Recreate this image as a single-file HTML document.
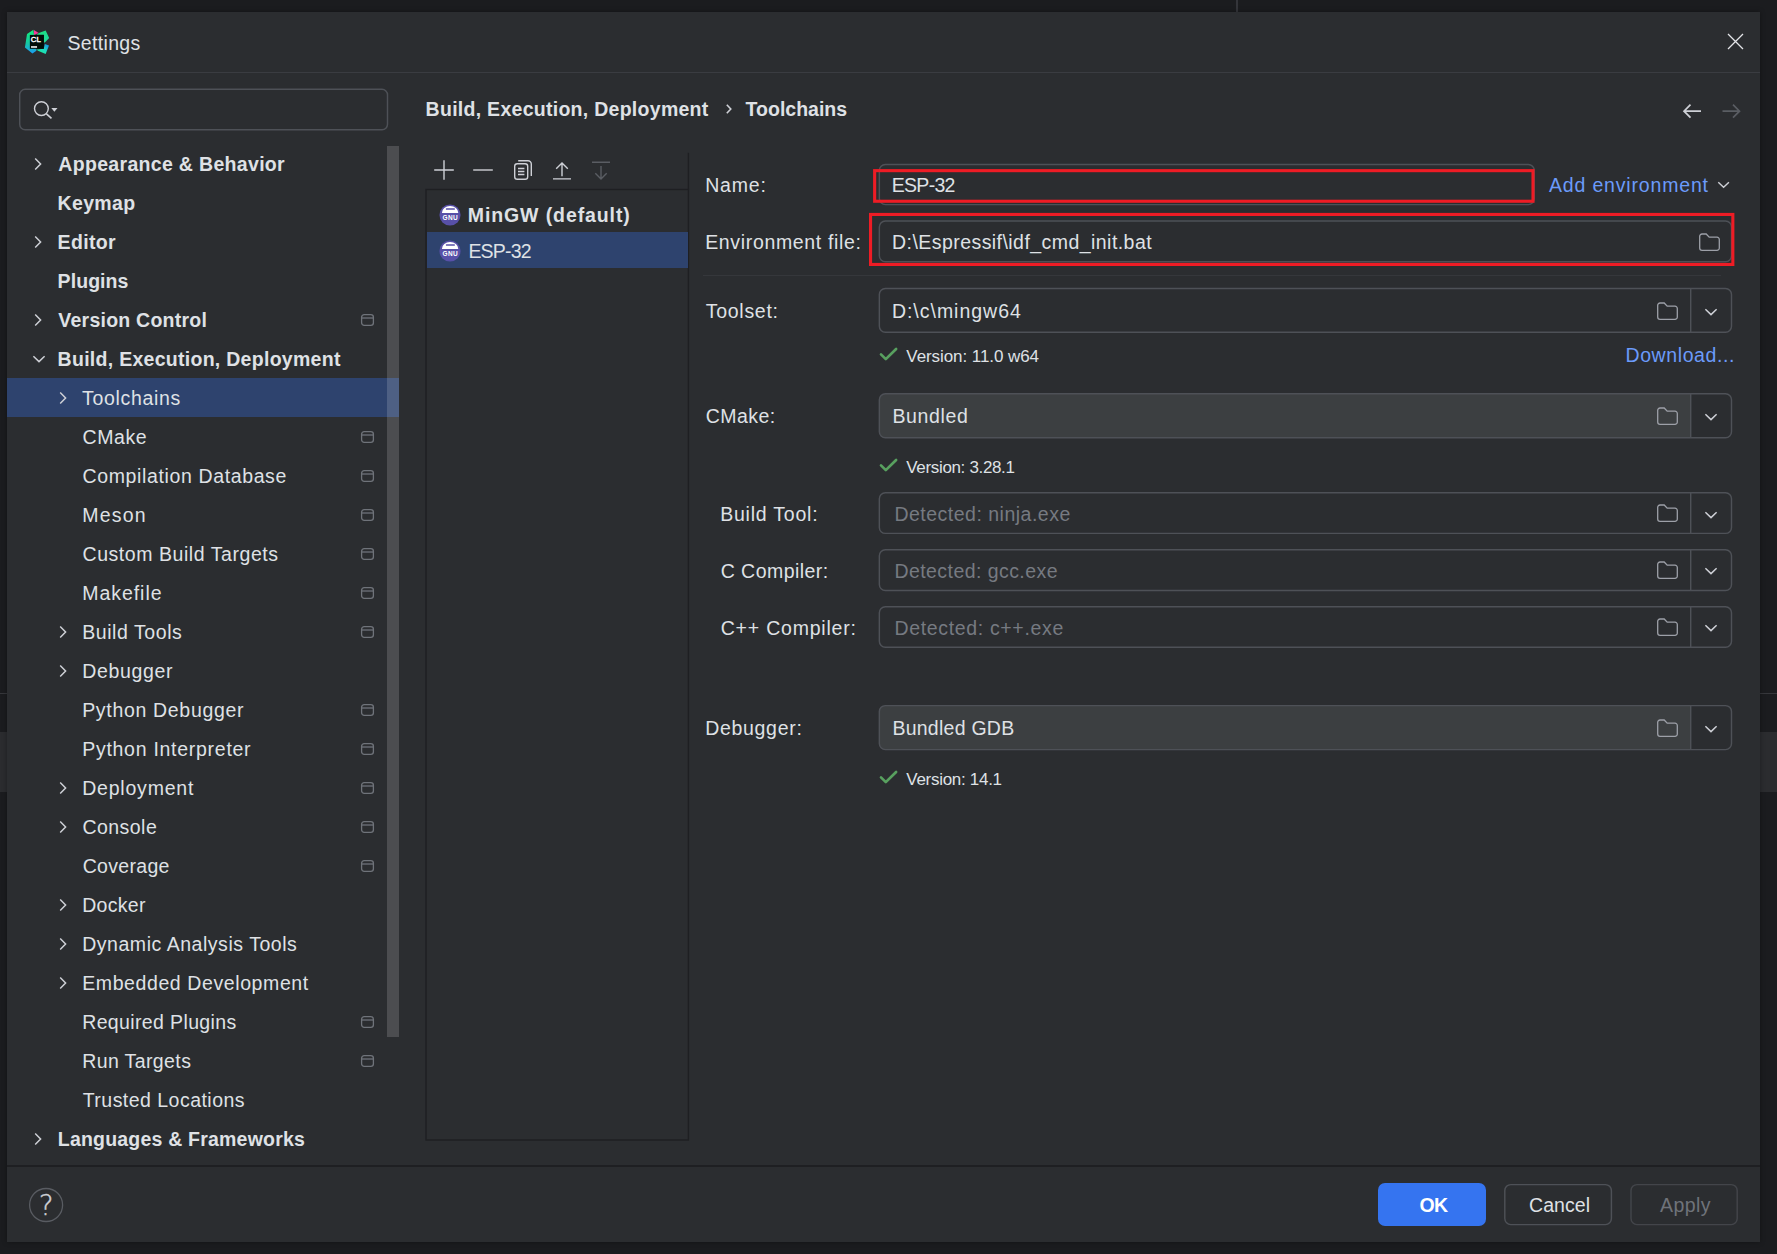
<!DOCTYPE html>
<html lang="en"><head><meta charset="utf-8"><title>Settings</title>
<style>
html,body{margin:0;padding:0}
body{width:1777px;height:1254px;position:relative;overflow:hidden;background:#1b1c1f;font-family:"Liberation Sans",sans-serif;font-size:19.5px;color:#dfe1e5}
div,svg,.t{position:absolute}
.t{white-space:pre;line-height:30px;height:30px}
svg{overflow:visible}
</style></head><body>
<div class="" style="left:0px;top:0px;width:1777px;height:1254px;background:#1b1c1f"></div>
<div class="" style="left:0px;top:693px;width:1777px;height:1.4px;background:#36373b"></div>
<div class="" style="left:0px;top:732px;width:1777px;height:60px;background:#2b2c2f"></div>
<div class="" style="left:1236px;top:0px;width:2px;height:12px;background:#34353a"></div>
<div class="dlg" style="left:7px;top:12px;width:1753px;height:1229.5px;background:#2b2d30;box-shadow:0 0 5px 0 rgba(0,0,0,.35)"></div>
<div class="" style="left:7px;top:72px;width:1753px;height:1px;background:#3a3c41"></div>
<div class="" style="left:7px;top:1165px;width:1753px;height:2px;background:#1e1f22"></div>
<svg style="left:16px;top:22px" width="50" height="40" viewBox="0 0 1568 1254" >
<defs>
<linearGradient id="ga" x1="0" y1="0" x2="0" y2="1"><stop offset="0" stop-color="#13f07c"/><stop offset=".55" stop-color="#16c9a0"/><stop offset="1" stop-color="#1a9df5"/></linearGradient>
<linearGradient id="gb" x1="0" y1="0" x2="1" y2="1"><stop offset="0" stop-color="#1ce27a"/><stop offset="1" stop-color="#1fd6a0"/></linearGradient>
<linearGradient id="gc" x1="0" y1="1" x2="1" y2="0"><stop offset="0" stop-color="#17f08a"/><stop offset=".5" stop-color="#1fdcc0"/><stop offset="1" stop-color="#1188e8"/></linearGradient>
</defs>
<polygon points="545,245 345,380 280,800 515,985 640,900 640,400 565,400" fill="url(#ga)"/>
<polygon points="560,250 715,345 565,405" fill="#f43b9c"/>
<polygon points="715,345 930,270 1040,505 905,640 870,640 870,400 640,400" fill="url(#gb)"/>
<polygon points="905,690 1035,735 930,1000 690,905 640,860 870,840" fill="url(#gc)"/>
<rect x="435" y="405" width="440" height="435" fill="#010d08"/>
<text x="464" y="626" font-family="Liberation Sans, sans-serif" font-size="248" fill="#fff" stroke="#fff" stroke-width="13" letter-spacing="4">CL</text>
<rect x="470" y="757" width="190" height="52" fill="#e8e8e8"/>
</svg>
<span class="t" style="left:67.50px;top:28.22px;letter-spacing:0.327px">Settings</span>
<svg style="left:1727px;top:33px" width="17" height="17" viewBox="0 0 17 17" ><path d="M1 1L16 16M16 1L1 16" stroke="#e4e5e9" stroke-width="1.3" fill="none"/></svg>
<svg style="left:17px;top:87px" width="374" height="46" viewBox="0 0 374 46" ><rect x="2.70" y="2.30" width="367.80" height="40.50" rx="5.5" fill="none" stroke="#4e5157" stroke-width="1.45"/></svg>
<svg style="left:32px;top:99px" width="27" height="22" viewBox="0 0 27 22" ><circle cx="9.4" cy="9.6" r="6.9" stroke="#ced0d6" stroke-width="1.4" fill="none"/><path d="M14.4 14.8L19.5 19.4" stroke="#ced0d6" stroke-width="1.6"/><path d="M19.3 9.1h6.2l-3.1 3.7z" fill="#ced0d6"/></svg>
<div class="" style="left:7px;top:378px;width:392px;height:39px;background:#2e436e"></div>
<div class="" style="left:387px;top:146px;width:12px;height:891px;background:rgba(255,255,255,.155)"></div>
<span class="t" style="left:58.30px;top:149.22px;font-weight:bold;letter-spacing:0.320px">Appearance &amp; Behavior</span>
<svg style="left:33.4px;top:156px" width="10" height="16" viewBox="0 0 10 16" ><path d="M2.200 2.500L7.600 8L2.200 13.500" stroke="#ced0d6" stroke-width="1.500" fill="none"/></svg>
<span class="t" style="left:57.60px;top:188.22px;font-weight:bold;letter-spacing:0.329px">Keymap</span>
<span class="t" style="left:57.60px;top:227.22px;font-weight:bold;letter-spacing:0.332px">Editor</span>
<svg style="left:33.4px;top:234px" width="10" height="16" viewBox="0 0 10 16" ><path d="M2.200 2.500L7.600 8L2.200 13.500" stroke="#ced0d6" stroke-width="1.500" fill="none"/></svg>
<span class="t" style="left:57.60px;top:266.22px;font-weight:bold;letter-spacing:0.071px">Plugins</span>
<span class="t" style="left:58.30px;top:305.22px;font-weight:bold;letter-spacing:0.245px">Version Control</span>
<svg style="left:33.4px;top:312px" width="10" height="16" viewBox="0 0 10 16" ><path d="M2.200 2.500L7.600 8L2.200 13.500" stroke="#ced0d6" stroke-width="1.500" fill="none"/></svg>
<svg style="left:360px;top:313px" width="15" height="14" viewBox="0 0 15 14" ><rect x="1.6" y="1.6" width="11.8" height="10.8" rx="2.6" stroke="#6f737a" stroke-width="1.3" fill="none"/><path d="M1.6 5h11.8" stroke="#6f737a" stroke-width="1.3"/></svg>
<span class="t" style="left:57.60px;top:344.22px;font-weight:bold;letter-spacing:0.281px">Build, Execution, Deployment</span>
<svg style="left:30.8px;top:354.2px" width="16" height="10" viewBox="0 0 16 10" ><path d="M2.400 2.300L8 7.600L13.600 2.300" stroke="#ced0d6" stroke-width="1.500" fill="none"/></svg>
<span class="t" style="left:82.10px;top:383.22px;letter-spacing:0.657px">Toolchains</span>
<svg style="left:57.8px;top:390px" width="10" height="16" viewBox="0 0 10 16" ><path d="M2.200 2.500L7.600 8L2.200 13.500" stroke="#ced0d6" stroke-width="1.500" fill="none"/></svg>
<span class="t" style="left:82.50px;top:422.22px;letter-spacing:0.595px">CMake</span>
<svg style="left:360px;top:430px" width="15" height="14" viewBox="0 0 15 14" ><rect x="1.6" y="1.6" width="11.8" height="10.8" rx="2.6" stroke="#6f737a" stroke-width="1.3" fill="none"/><path d="M1.6 5h11.8" stroke="#6f737a" stroke-width="1.3"/></svg>
<span class="t" style="left:82.50px;top:461.22px;letter-spacing:0.631px">Compilation Database</span>
<svg style="left:360px;top:469px" width="15" height="14" viewBox="0 0 15 14" ><rect x="1.6" y="1.6" width="11.8" height="10.8" rx="2.6" stroke="#6f737a" stroke-width="1.3" fill="none"/><path d="M1.6 5h11.8" stroke="#6f737a" stroke-width="1.3"/></svg>
<span class="t" style="left:82.20px;top:500.22px;letter-spacing:1.204px">Meson</span>
<svg style="left:360px;top:508px" width="15" height="14" viewBox="0 0 15 14" ><rect x="1.6" y="1.6" width="11.8" height="10.8" rx="2.6" stroke="#6f737a" stroke-width="1.3" fill="none"/><path d="M1.6 5h11.8" stroke="#6f737a" stroke-width="1.3"/></svg>
<span class="t" style="left:82.50px;top:539.22px;letter-spacing:0.559px">Custom Build Targets</span>
<svg style="left:360px;top:547px" width="15" height="14" viewBox="0 0 15 14" ><rect x="1.6" y="1.6" width="11.8" height="10.8" rx="2.6" stroke="#6f737a" stroke-width="1.3" fill="none"/><path d="M1.6 5h11.8" stroke="#6f737a" stroke-width="1.3"/></svg>
<span class="t" style="left:82.20px;top:578.22px;letter-spacing:0.962px">Makefile</span>
<svg style="left:360px;top:586px" width="15" height="14" viewBox="0 0 15 14" ><rect x="1.6" y="1.6" width="11.8" height="10.8" rx="2.6" stroke="#6f737a" stroke-width="1.3" fill="none"/><path d="M1.6 5h11.8" stroke="#6f737a" stroke-width="1.3"/></svg>
<span class="t" style="left:82.20px;top:617.22px;letter-spacing:0.565px">Build Tools</span>
<svg style="left:57.8px;top:624px" width="10" height="16" viewBox="0 0 10 16" ><path d="M2.200 2.500L7.600 8L2.200 13.500" stroke="#ced0d6" stroke-width="1.500" fill="none"/></svg>
<svg style="left:360px;top:625px" width="15" height="14" viewBox="0 0 15 14" ><rect x="1.6" y="1.6" width="11.8" height="10.8" rx="2.6" stroke="#6f737a" stroke-width="1.3" fill="none"/><path d="M1.6 5h11.8" stroke="#6f737a" stroke-width="1.3"/></svg>
<span class="t" style="left:82.20px;top:656.22px;letter-spacing:0.678px">Debugger</span>
<svg style="left:57.8px;top:663px" width="10" height="16" viewBox="0 0 10 16" ><path d="M2.200 2.500L7.600 8L2.200 13.500" stroke="#ced0d6" stroke-width="1.500" fill="none"/></svg>
<span class="t" style="left:82.20px;top:695.22px;letter-spacing:0.680px">Python Debugger</span>
<svg style="left:360px;top:703px" width="15" height="14" viewBox="0 0 15 14" ><rect x="1.6" y="1.6" width="11.8" height="10.8" rx="2.6" stroke="#6f737a" stroke-width="1.3" fill="none"/><path d="M1.6 5h11.8" stroke="#6f737a" stroke-width="1.3"/></svg>
<span class="t" style="left:82.20px;top:734.22px;letter-spacing:0.724px">Python Interpreter</span>
<svg style="left:360px;top:742px" width="15" height="14" viewBox="0 0 15 14" ><rect x="1.6" y="1.6" width="11.8" height="10.8" rx="2.6" stroke="#6f737a" stroke-width="1.3" fill="none"/><path d="M1.6 5h11.8" stroke="#6f737a" stroke-width="1.3"/></svg>
<span class="t" style="left:82.20px;top:773.22px;letter-spacing:0.796px">Deployment</span>
<svg style="left:57.8px;top:780px" width="10" height="16" viewBox="0 0 10 16" ><path d="M2.200 2.500L7.600 8L2.200 13.500" stroke="#ced0d6" stroke-width="1.500" fill="none"/></svg>
<svg style="left:360px;top:781px" width="15" height="14" viewBox="0 0 15 14" ><rect x="1.6" y="1.6" width="11.8" height="10.8" rx="2.6" stroke="#6f737a" stroke-width="1.3" fill="none"/><path d="M1.6 5h11.8" stroke="#6f737a" stroke-width="1.3"/></svg>
<span class="t" style="left:82.50px;top:812.22px;letter-spacing:0.450px">Console</span>
<svg style="left:57.8px;top:819px" width="10" height="16" viewBox="0 0 10 16" ><path d="M2.200 2.500L7.600 8L2.200 13.500" stroke="#ced0d6" stroke-width="1.500" fill="none"/></svg>
<svg style="left:360px;top:820px" width="15" height="14" viewBox="0 0 15 14" ><rect x="1.6" y="1.6" width="11.8" height="10.8" rx="2.6" stroke="#6f737a" stroke-width="1.3" fill="none"/><path d="M1.6 5h11.8" stroke="#6f737a" stroke-width="1.3"/></svg>
<span class="t" style="left:82.70px;top:851.22px;letter-spacing:0.313px">Coverage</span>
<svg style="left:360px;top:859px" width="15" height="14" viewBox="0 0 15 14" ><rect x="1.6" y="1.6" width="11.8" height="10.8" rx="2.6" stroke="#6f737a" stroke-width="1.3" fill="none"/><path d="M1.6 5h11.8" stroke="#6f737a" stroke-width="1.3"/></svg>
<span class="t" style="left:82.20px;top:890.22px;letter-spacing:0.306px">Docker</span>
<svg style="left:57.8px;top:897px" width="10" height="16" viewBox="0 0 10 16" ><path d="M2.200 2.500L7.600 8L2.200 13.500" stroke="#ced0d6" stroke-width="1.500" fill="none"/></svg>
<span class="t" style="left:82.20px;top:929.22px;letter-spacing:0.535px">Dynamic Analysis Tools</span>
<svg style="left:57.8px;top:936px" width="10" height="16" viewBox="0 0 10 16" ><path d="M2.200 2.500L7.600 8L2.200 13.500" stroke="#ced0d6" stroke-width="1.500" fill="none"/></svg>
<span class="t" style="left:82.20px;top:968.22px;letter-spacing:0.599px">Embedded Development</span>
<svg style="left:57.8px;top:975px" width="10" height="16" viewBox="0 0 10 16" ><path d="M2.200 2.500L7.600 8L2.200 13.500" stroke="#ced0d6" stroke-width="1.500" fill="none"/></svg>
<span class="t" style="left:82.20px;top:1007.22px;letter-spacing:0.370px">Required Plugins</span>
<svg style="left:360px;top:1015px" width="15" height="14" viewBox="0 0 15 14" ><rect x="1.6" y="1.6" width="11.8" height="10.8" rx="2.6" stroke="#6f737a" stroke-width="1.3" fill="none"/><path d="M1.6 5h11.8" stroke="#6f737a" stroke-width="1.3"/></svg>
<span class="t" style="left:82.20px;top:1046.22px;letter-spacing:0.391px">Run Targets</span>
<svg style="left:360px;top:1054px" width="15" height="14" viewBox="0 0 15 14" ><rect x="1.6" y="1.6" width="11.8" height="10.8" rx="2.6" stroke="#6f737a" stroke-width="1.3" fill="none"/><path d="M1.6 5h11.8" stroke="#6f737a" stroke-width="1.3"/></svg>
<span class="t" style="left:82.70px;top:1085.22px;letter-spacing:0.473px">Trusted Locations</span>
<span class="t" style="left:57.80px;top:1124.22px;font-weight:bold;letter-spacing:0.205px">Languages &amp; Frameworks</span>
<svg style="left:33.4px;top:1131px" width="10" height="16" viewBox="0 0 10 16" ><path d="M2.200 2.500L7.600 8L2.200 13.500" stroke="#ced0d6" stroke-width="1.500" fill="none"/></svg>
<span class="t" style="left:425.60px;top:94.22px;font-weight:bold;letter-spacing:0.278px">Build, Execution, Deployment</span>
<svg style="left:725px;top:103px" width="8" height="12" viewBox="0 0 8 12" ><path d="M1.800 1.700L5.800 6L1.800 10.300" stroke="#ced0d6" stroke-width="1.600" fill="none"/></svg>
<span class="t" style="left:745.60px;top:94.22px;font-weight:bold;letter-spacing:0.007px">Toolchains</span>
<svg style="left:1682px;top:102px" width="20" height="18" viewBox="0 0 20 18" ><path d="M19 9.200H2.500M8.500 2.700L2 9.200L8.500 15.700" stroke="#ced0d6" stroke-width="1.700" fill="none"/></svg>
<svg style="left:1721px;top:102px" width="20" height="18" viewBox="0 0 20 18" ><path d="M1.500 9.200H18M12 2.700L18.500 9.200L12 15.700" stroke="#5a5d63" stroke-width="1.700" fill="none"/></svg>
<svg style="left:424px;top:187px" width="268" height="957" viewBox="0 0 268 957" ><rect x="2.00" y="2.50" width="262.40" height="950.50" rx="0" fill="none" stroke="#1e1f22" stroke-width="1.4"/></svg>
<svg style="left:686px;top:152px" width="5" height="40" viewBox="0 0 5 40" ><path d="M2.400 0.800V38" stroke="#1e1f22" stroke-width="1.400"/></svg>
<div class="" style="left:427px;top:232px;width:261px;height:36px;background:#2e436e"></div>
<svg style="left:433.2px;top:159.4px" width="22" height="22" viewBox="0 0 22 22" ><path d="M11 1.200V20.800M1.200 11H20.800" stroke="#ced0d6" stroke-width="1.4"/></svg>
<svg style="left:472.2px;top:159.1px" width="22" height="22" viewBox="0 0 22 22" ><path d="M1.200 11H20.800" stroke="#ced0d6" stroke-width="1.4"/></svg>
<svg style="left:513px;top:159.3px" width="20" height="22" viewBox="0 0 20 22" ><rect x="1.7" y="4.7" width="13" height="15.6" rx="2.6" stroke="#ced0d6" stroke-width="1.4" fill="none"/><path d="M5.2 1.7H15a3.3 3.3 0 0 1 3.3 3.3V17" stroke="#ced0d6" stroke-width="1.4" fill="none"/><path d="M5 9.5h6.4M5 12.5h6.4M5 15.5h6.4" stroke="#ced0d6" stroke-width="1.3"/></svg>
<svg style="left:552px;top:160px" width="20" height="22" viewBox="0 0 20 22" ><path d="M10 16.200V3.200M4.200 8.700L10 2.900L15.800 8.700M1 18.900H19" stroke="#ced0d6" stroke-width="1.4" fill="none"/></svg>
<svg style="left:591px;top:160px" width="20" height="22" viewBox="0 0 20 22" ><path d="M1 2.2H19M10 6V18.8M4.3 13.3L10 19L15.7 13.3" stroke="#5a5d63" stroke-width="1.4" fill="none"/></svg>
<svg style="left:438.95px;top:204.1px" width="22" height="22" viewBox="0 0 22 22" ><circle cx="11" cy="11" r="10.55" fill="#5850a8"/>
<path d="M2.900 8.900A8.200 7 0 0 1 19.300 8.900Z" fill="#fff"/><rect x="6.900" y="4.300" width="9" height="1.400" rx="0.500" fill="#5850a8"/>
<text x="11.3" y="15.6" text-anchor="middle" font-family="Liberation Sans, sans-serif" font-weight="bold" font-size="6.5" letter-spacing="0.45" fill="#fff">GNU</text></svg>
<svg style="left:438.95px;top:240.1px" width="22" height="22" viewBox="0 0 22 22" ><circle cx="11" cy="11" r="10.55" fill="#5850a8"/>
<path d="M2.900 8.900A8.200 7 0 0 1 19.300 8.900Z" fill="#fff"/><rect x="6.900" y="4.300" width="9" height="1.400" rx="0.500" fill="#5850a8"/>
<text x="11.3" y="15.6" text-anchor="middle" font-family="Liberation Sans, sans-serif" font-weight="bold" font-size="6.5" letter-spacing="0.45" fill="#fff">GNU</text></svg>
<span class="t" style="left:467.80px;top:200.22px;font-weight:bold;letter-spacing:0.895px">MinGW (default)</span>
<span class="t" style="left:468.40px;top:236.22px;letter-spacing:-0.812px">ESP-32</span>
<span class="t" style="left:705.20px;top:170.22px;letter-spacing:0.821px">Name:</span>
<svg style="left:877px;top:162px" width="661" height="46" viewBox="0 0 661 46" ><rect x="2.35" y="2.40" width="654.95" height="40.20" rx="6" fill="none" stroke="#4e5157" stroke-width="1.45"/></svg>
<span class="t" style="left:891.70px;top:170.22px;letter-spacing:-0.692px">ESP-32</span>
<span class="t" style="left:1549.00px;top:170.22px;color:#6b9bfa;letter-spacing:0.828px">Add environment</span>
<svg style="left:1715.7px;top:179.85px" width="15.2" height="9.5" viewBox="0 0 16 10" ><path d="M2.400 2.300L8 7.600L13.600 2.300" stroke="#ced0d6" stroke-width="1.500" fill="none"/></svg>
<span class="t" style="left:705.20px;top:227.22px;letter-spacing:0.655px">Environment file:</span>
<svg style="left:877px;top:219px" width="858" height="46" viewBox="0 0 858 46" ><rect x="2.35" y="2.00" width="852.15" height="40.70" rx="6" fill="none" stroke="#4e5157" stroke-width="1.45"/></svg>
<svg style="left:1698px;top:232px" width="23" height="20" viewBox="0 0 23 20" ><path d="M1.7 4.3a2.3 2.3 0 0 1 2.3-2.3h4.2l3 3.2h7.8a2.3 2.3 0 0 1 2.3 2.3v8.500a2.300 2.300 0 0 1-2.300 2.300H4a2.300 2.300 0 0 1-2.300-2.300z" stroke="#9da0a8" stroke-width="1.300" fill="none"/></svg>
<span class="t" style="left:892.00px;top:227.22px;letter-spacing:0.447px">D:\Espressif\idf_cmd_init.bat</span>
<div class="" style="left:703px;top:275px;width:1018px;height:1px;background:#35373b"></div>
<span class="t" style="left:705.70px;top:296.22px;letter-spacing:0.731px">Toolset:</span>
<svg style="left:877px;top:286px" width="858" height="50" viewBox="0 0 858 50" ><rect x="2.35" y="2.50" width="852.15" height="43.80" rx="6" fill="none" stroke="#4e5157" stroke-width="1.45"/></svg>
<svg style="left:1689px;top:288px" width="3" height="45" viewBox="0 0 3 45" ><path d="M1.700 0.50V44.30" stroke="#4e5157" stroke-width="1.450"/></svg>
<svg style="left:1702.9px;top:306.8px" width="16" height="10" viewBox="0 0 16 10" ><path d="M2.400 2.300L8 7.600L13.600 2.300" stroke="#ced0d6" stroke-width="1.500" fill="none"/></svg>
<svg style="left:1656px;top:301.1px" width="23" height="20" viewBox="0 0 23 20" ><path d="M1.7 4.3a2.3 2.3 0 0 1 2.3-2.3h4.2l3 3.2h7.8a2.3 2.3 0 0 1 2.3 2.3v8.500a2.300 2.300 0 0 1-2.300 2.300H4a2.300 2.300 0 0 1-2.300-2.300z" stroke="#9da0a8" stroke-width="1.300" fill="none"/></svg>
<span class="t" style="left:891.90px;top:296.22px;letter-spacing:0.984px">D:\c\mingw64</span>
<svg style="left:879px;top:347px" width="20" height="16" viewBox="0 0 20 16" ><path d="M2 7.400L6.800 12.100L17.100 2" stroke="#58a05f" stroke-width="2.700" stroke-linecap="round" stroke-linejoin="round" fill="none"/></svg>
<span class="t" style="left:906.30px;top:341.80px;font-size:17px;letter-spacing:-0.071px">Version: 11.0 w64</span>
<span class="t" style="left:1625.50px;top:340.22px;color:#6b9bfa;letter-spacing:0.594px">Download...</span>
<span class="t" style="left:705.70px;top:401.22px;letter-spacing:0.467px">CMake:</span>
<svg style="left:877px;top:391px" width="858" height="50" viewBox="0 0 858 50" ><path d="M8.35 2.70H813.70V46.70H8.35A6 6 0 0 1 2.35 40.70V8.70A6 6 0 0 1 8.35 2.70Z" fill="#3c3f41"/></svg>
<svg style="left:877px;top:391px" width="858" height="50" viewBox="0 0 858 50" ><rect x="2.35" y="2.70" width="852.15" height="44.00" rx="6" fill="none" stroke="#4e5157" stroke-width="1.45"/></svg>
<svg style="left:1689px;top:393px" width="3" height="46" viewBox="0 0 3 46" ><path d="M1.700 0.70V44.70" stroke="#4e5157" stroke-width="1.450"/></svg>
<svg style="left:1702.9px;top:412.1px" width="16" height="10" viewBox="0 0 16 10" ><path d="M2.400 2.300L8 7.600L13.600 2.300" stroke="#ced0d6" stroke-width="1.500" fill="none"/></svg>
<svg style="left:1656px;top:406.4px" width="23" height="20" viewBox="0 0 23 20" ><path d="M1.7 4.3a2.3 2.3 0 0 1 2.3-2.3h4.2l3 3.2h7.8a2.3 2.3 0 0 1 2.3 2.3v8.500a2.300 2.300 0 0 1-2.300 2.300H4a2.300 2.300 0 0 1-2.300-2.300z" stroke="#9da0a8" stroke-width="1.300" fill="none"/></svg>
<span class="t" style="left:892.40px;top:401.22px;letter-spacing:0.664px">Bundled</span>
<svg style="left:879px;top:458.3px" width="20" height="16" viewBox="0 0 20 16" ><path d="M2 7.400L6.800 12.100L17.100 2" stroke="#58a05f" stroke-width="2.700" stroke-linecap="round" stroke-linejoin="round" fill="none"/></svg>
<span class="t" style="left:906.30px;top:452.90px;font-size:17px;letter-spacing:-0.340px">Version: 3.28.1</span>
<span class="t" style="left:720.20px;top:499.22px;letter-spacing:0.775px">Build Tool:</span>
<svg style="left:877px;top:490px" width="858" height="47" viewBox="0 0 858 47" ><rect x="2.35" y="2.80" width="852.15" height="40.60" rx="6" fill="none" stroke="#4e5157" stroke-width="1.45"/></svg>
<svg style="left:1689px;top:492px" width="3" height="42" viewBox="0 0 3 42" ><path d="M1.700 0.80V41.40" stroke="#4e5157" stroke-width="1.450"/></svg>
<svg style="left:1702.9px;top:509.5px" width="16" height="10" viewBox="0 0 16 10" ><path d="M2.400 2.300L8 7.600L13.600 2.300" stroke="#ced0d6" stroke-width="1.500" fill="none"/></svg>
<svg style="left:1656px;top:502.6px" width="23" height="20" viewBox="0 0 23 20" ><path d="M1.7 4.3a2.3 2.3 0 0 1 2.3-2.3h4.2l3 3.2h7.8a2.3 2.3 0 0 1 2.3 2.3v8.500a2.300 2.300 0 0 1-2.300 2.300H4a2.300 2.300 0 0 1-2.300-2.300z" stroke="#9da0a8" stroke-width="1.300" fill="none"/></svg>
<span class="t" style="left:894.40px;top:499.22px;color:#767a81;letter-spacing:0.495px">Detected: ninja.exe</span>
<span class="t" style="left:720.70px;top:556.22px;letter-spacing:0.458px">C Compiler:</span>
<svg style="left:877px;top:547px" width="858" height="47" viewBox="0 0 858 47" ><rect x="2.35" y="2.70" width="852.15" height="40.70" rx="6" fill="none" stroke="#4e5157" stroke-width="1.45"/></svg>
<svg style="left:1689px;top:549px" width="3" height="42" viewBox="0 0 3 42" ><path d="M1.700 0.70V41.40" stroke="#4e5157" stroke-width="1.450"/></svg>
<svg style="left:1702.9px;top:566.45px" width="16" height="10" viewBox="0 0 16 10" ><path d="M2.400 2.300L8 7.600L13.600 2.300" stroke="#ced0d6" stroke-width="1.500" fill="none"/></svg>
<svg style="left:1656px;top:559.55px" width="23" height="20" viewBox="0 0 23 20" ><path d="M1.7 4.3a2.3 2.3 0 0 1 2.3-2.3h4.2l3 3.2h7.8a2.3 2.3 0 0 1 2.3 2.3v8.500a2.300 2.300 0 0 1-2.300 2.300H4a2.300 2.300 0 0 1-2.300-2.300z" stroke="#9da0a8" stroke-width="1.300" fill="none"/></svg>
<span class="t" style="left:894.40px;top:556.22px;color:#767a81;letter-spacing:0.441px">Detected: gcc.exe</span>
<span class="t" style="left:720.70px;top:613.22px;letter-spacing:0.792px">C++ Compiler:</span>
<svg style="left:877px;top:604px" width="858" height="47" viewBox="0 0 858 47" ><rect x="2.35" y="2.70" width="852.15" height="40.60" rx="6" fill="none" stroke="#4e5157" stroke-width="1.45"/></svg>
<svg style="left:1689px;top:606px" width="3" height="42" viewBox="0 0 3 42" ><path d="M1.700 0.70V41.30" stroke="#4e5157" stroke-width="1.450"/></svg>
<svg style="left:1702.9px;top:623.4px" width="16" height="10" viewBox="0 0 16 10" ><path d="M2.400 2.300L8 7.600L13.600 2.300" stroke="#ced0d6" stroke-width="1.500" fill="none"/></svg>
<svg style="left:1656px;top:616.5px" width="23" height="20" viewBox="0 0 23 20" ><path d="M1.7 4.3a2.3 2.3 0 0 1 2.3-2.3h4.2l3 3.2h7.8a2.3 2.3 0 0 1 2.3 2.3v8.500a2.300 2.300 0 0 1-2.300 2.300H4a2.300 2.300 0 0 1-2.300-2.300z" stroke="#9da0a8" stroke-width="1.300" fill="none"/></svg>
<span class="t" style="left:894.40px;top:613.22px;color:#767a81;letter-spacing:0.661px">Detected: c++.exe</span>
<span class="t" style="left:705.20px;top:713.22px;letter-spacing:0.694px">Debugger:</span>
<svg style="left:877px;top:703px" width="858" height="50" viewBox="0 0 858 50" ><path d="M8.35 2.60H813.70V46.60H8.35A6 6 0 0 1 2.35 40.60V8.60A6 6 0 0 1 8.35 2.60Z" fill="#3c3f41"/></svg>
<svg style="left:877px;top:703px" width="858" height="50" viewBox="0 0 858 50" ><rect x="2.35" y="2.60" width="852.15" height="44.00" rx="6" fill="none" stroke="#4e5157" stroke-width="1.45"/></svg>
<svg style="left:1689px;top:705px" width="3" height="46" viewBox="0 0 3 46" ><path d="M1.700 0.60V44.60" stroke="#4e5157" stroke-width="1.450"/></svg>
<svg style="left:1702.9px;top:724px" width="16" height="10" viewBox="0 0 16 10" ><path d="M2.400 2.300L8 7.600L13.600 2.300" stroke="#ced0d6" stroke-width="1.500" fill="none"/></svg>
<svg style="left:1656px;top:718.3px" width="23" height="20" viewBox="0 0 23 20" ><path d="M1.7 4.3a2.3 2.3 0 0 1 2.3-2.3h4.2l3 3.2h7.8a2.3 2.3 0 0 1 2.3 2.3v8.500a2.300 2.300 0 0 1-2.300 2.300H4a2.300 2.300 0 0 1-2.300-2.300z" stroke="#9da0a8" stroke-width="1.300" fill="none"/></svg>
<span class="t" style="left:892.40px;top:713.22px;letter-spacing:0.257px">Bundled GDB</span>
<svg style="left:879px;top:769.9px" width="20" height="16" viewBox="0 0 20 16" ><path d="M2 7.400L6.800 12.100L17.100 2" stroke="#58a05f" stroke-width="2.700" stroke-linecap="round" stroke-linejoin="round" fill="none"/></svg>
<span class="t" style="left:906.30px;top:765.10px;font-size:17px;letter-spacing:-0.290px">Version: 14.1</span>
<svg style="left:28px;top:1187px" width="36" height="36" viewBox="0 0 36 36" ><circle cx="18.1" cy="18" r="16.500" stroke="#595c62" stroke-width="1.300" fill="none"/></svg>
<span class="t" style="left:37.600px;top:1188.200px;-webkit-text-stroke:0.350px #ced0d6;width:17px;text-align:center;font-family:DejaVu Sans,sans-serif;font-weight:200;font-size:28px;line-height:36px;height:36px;color:#ced0d6">?</span>
<div class="" style="left:1378px;top:1183px;width:108px;height:43px;background:#3574f0;border-radius:7px"></div>
<span class="t" style="left:1419.60px;top:1190.22px;color:#fff;font-weight:bold;letter-spacing:-0.768px">OK</span>
<svg style="left:1502px;top:1182px" width="113" height="46" viewBox="0 0 113 46" ><rect x="2.80" y="2.60" width="106.60" height="40.00" rx="6" fill="none" stroke="#4e5157" stroke-width="1.45"/></svg>
<span class="t" style="left:1529.00px;top:1190.22px;letter-spacing:0.087px">Cancel</span>
<svg style="left:1629px;top:1182px" width="112" height="46" viewBox="0 0 112 46" ><rect x="2.00" y="2.60" width="106.20" height="40.00" rx="6" fill="none" stroke="#43454a" stroke-width="1.45"/></svg>
<span class="t" style="left:1660.10px;top:1190.22px;color:#6f737a;letter-spacing:0.418px">Apply</span>
<svg style="left:872px;top:168px" width="665" height="37" viewBox="0 0 665 37" ><rect x="2.65" y="2.65" width="658.35" height="30.60" rx="0" fill="none" stroke="#ee1c25" stroke-width="3.1"/></svg>
<svg style="left:868px;top:212px" width="868" height="56" viewBox="0 0 868 56" ><rect x="2.55" y="2.45" width="862.30" height="50.00" rx="0" fill="none" stroke="#ee1c25" stroke-width="3.1"/></svg>
</body></html>
